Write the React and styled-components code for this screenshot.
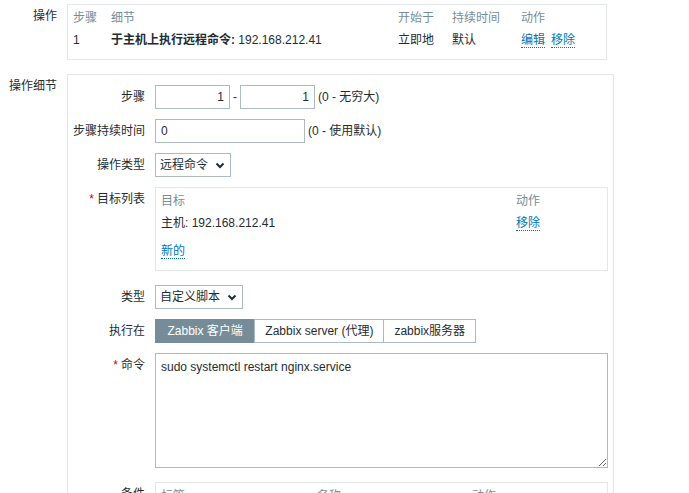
import React from 'react';
import styled, { createGlobalStyle } from 'styled-components';

const GlobalStyle = createGlobalStyle`
  html, body {
    margin: 0;
    overflow: hidden;
    background: #fff;
  }
  body {
    font-family: "Liberation Sans", Arial, "Noto Sans CJK SC", sans-serif;
    font-size: 12px;
    line-height: 14px;
    color: #1f2c33;
  }
`;

const Page = styled.div`
  display: grid;
  grid-template-columns: 57px 1fr;
  column-gap: 10px;
  row-gap: 14px;
  padding-top: 4px;
  align-items: start;
`;

const SectionLabel = styled.div`
  text-align: right;
  line-height: 24px;
  white-space: nowrap;
`;

const Box = styled.div`
  box-sizing: border-box;
  width: ${ props => props.width || '100%' };
  height: ${ props => props.height || 'auto' };
  border: 1px solid #e3e7ea;
  padding: ${ props => props.padding || '2px 5px 8px' };
  background: #fff;
`;

const Grid = styled.div`
  display: grid;
  grid-template-columns: ${ props => props.cols };
  line-height: 22px;
  white-space: nowrap;
`;

const Head = styled.div`
  color: #768d99;
`;

const Cell = styled.div`
  font-weight: ${ props => props.bold ? 'bold' : 'normal' };
`;

const Link = styled.span`
  color: #0275b8;
  border-bottom: 1px dotted #0275b8;
  margin-right: ${ props => props.gap || '0' };
  cursor: pointer;
`;

const FormBox = styled.div`
  box-sizing: border-box;
  width: 547px;
  height: 460px;
  border: 1px solid #e3e7ea;
  padding: 10px 5px 0 0;
`;

const Row = styled.div`
  display: grid;
  grid-template-columns: 77px 1fr;
  column-gap: 10px;
  align-items: start;
  margin-bottom: ${ props => props.after || '10px' };
`;

const Label = styled.div`
  text-align: right;
  line-height: 24px;
  white-space: nowrap;
`;

const Star = styled.span`
  color: #d40000;
  margin-right: 3px;
`;

const Field = styled.div`
  display: flex;
  align-items: center;
  height: 24px;
  white-space: nowrap;
`;

const Input = styled.div`
  box-sizing: border-box;
  width: ${ props => props.width };
  height: 24px;
  line-height: 22px;
  border: 1px solid #acbbc2;
  padding: 0 5px;
  text-align: ${ props => props.right ? 'right' : 'left' };
`;

const Dash = styled.span`
  margin: 0 3px;
`;

const Hint = styled.span`
  margin-left: 3px;
`;

const Select = styled.div`
  box-sizing: border-box;
  display: flex;
  align-items: center;
  height: 24px;
  border: 1px solid #acbbc2;
  padding: 0 5px 0 4px;
  gap: 7px;
`;

const Segments = styled.div`
  display: flex;
`;

const Segment = styled.div`
  box-sizing: border-box;
  height: 24px;
  line-height: 22px;
  padding: 0 ${ props => props.pad || '10px' };
  border: 1px solid ${ props => props.active ? '#768d99' : '#acbbc2' };
  margin-left: ${ props => props.first ? '0' : '-1px' };
  background: ${ props => props.active ? '#768d99' : '#fff' };
  color: ${ props => props.active ? '#fff' : '#1f2c33' };
`;

const TextArea = styled.textarea`
  box-sizing: border-box;
  display: block;
  width: 453px;
  height: 115px;
  margin: 0;
  border: 1px solid #acbbc2;
  border-radius: 0;
  padding: 6px 5px;
  font: inherit;
  line-height: 14px;
  color: #1f2c33;
  outline: none;
  resize: both;
`;

const NewRow = styled.div`
  margin-top: 6px;
  line-height: 22px;
`;

function Chevron() {
  return <svg width="10" height="7" viewBox="0 0 10 7">
    <polyline points="1.5,1.5 5,5 8.5,1.5" fill="none" stroke="#1f2c33" strokeWidth="2" />
  </svg>
}

export default function App() {

  return <>
    <GlobalStyle />
    <Page>
      <SectionLabel>操作</SectionLabel>
      <Box width="540px">
        <Grid cols="38px 287px 54px 69px 1fr">
          <Head>步骤</Head>
          <Head>细节</Head>
          <Head>开始于</Head>
          <Head>持续时间</Head>
          <Head>动作</Head>
          <Cell>1</Cell>
          <Cell><b>于主机上执行远程命令:</b> 192.168.212.41</Cell>
          <Cell>立即地</Cell>
          <Cell>默认</Cell>
          <Cell><Link gap="6px">编辑</Link><Link>移除</Link></Cell>
        </Grid>
      </Box>

      <SectionLabel>操作细节</SectionLabel>
      <FormBox>
        <Row>
          <Label>步骤</Label>
          <Field>
            <Input width="75px" right>1</Input>
            <Dash>-</Dash>
            <Input width="75px" right>1</Input>
            <Hint>(0 - 无穷大)</Hint>
          </Field>
        </Row>
        <Row>
          <Label>步骤持续时间</Label>
          <Field>
            <Input width="150px">0</Input>
            <Hint>(0 - 使用默认)</Hint>
          </Field>
        </Row>
        <Row>
          <Label>操作类型</Label>
          <Field>
            <Select>远程命令<Chevron /></Select>
          </Field>
        </Row>
        <Row after="14px">
          <Label><Star>*</Star>目标列表</Label>
          <Box width="453px" height="84px">
            <Grid cols="1fr 86px">
              <Head>目标</Head>
              <Head>动作</Head>
              <Cell>主机: 192.168.212.41</Cell>
              <Cell><Link>移除</Link></Cell>
            </Grid>
            <NewRow><Link>新的</Link></NewRow>
          </Box>
        </Row>
        <Row>
          <Label>类型</Label>
          <Field>
            <Select>自定义脚本<Chevron /></Select>
          </Field>
        </Row>
        <Row>
          <Label>执行在</Label>
          <Field>
            <Segments>
              <Segment active first pad="11.5px">Zabbix 客户端</Segment>
              <Segment>Zabbix server (代理)</Segment>
              <Segment>zabbix服务器</Segment>
            </Segments>
          </Field>
        </Row>
        <Row after="14px">
          <Label><Star>*</Star>命令</Label>
          <TextArea defaultValue="sudo systemctl restart nginx.service" spellCheck={ false } />
        </Row>
        <Row>
          <Label>条件</Label>
          <Box width="453px" height="60px">
            <Grid cols="156px 155px 1fr">
              <Head>标签</Head>
              <Head>名称</Head>
              <Head>动作</Head>
            </Grid>
          </Box>
        </Row>
      </FormBox>
    </Page>
  </>

}
